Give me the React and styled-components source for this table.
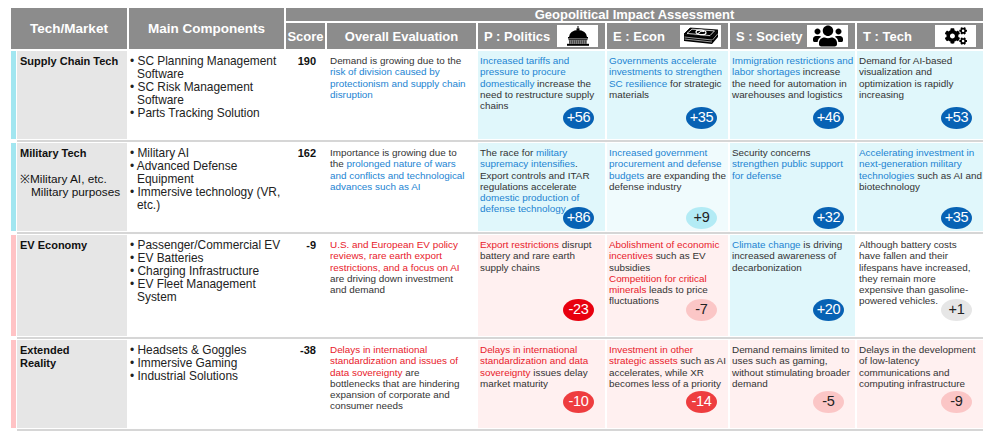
import React from "react";
import styled, { createGlobalStyle } from "styled-components";
import { FaUsers, FaCogs } from "react-icons/fa";

const GlobalStyle = createGlobalStyle`
  html, body { margin: 0; padding: 0; background: #fff; }
  body { font-family: "Liberation Sans", Arial, sans-serif; color: #333; }
  * { box-sizing: border-box; }
`;

const COLS = "116px 155px 39px 149px 127px 121px 125px 126px";

const Page = styled.div`
  width: 1000px;
  height: 437px;
  overflow: hidden;
  padding: 8px 0 0 11px;
`;

const Header = styled.div`
  display: grid;
  grid-template-columns: ${COLS};
  grid-template-rows: 13px 26px;
  gap: 2px;
  margin-bottom: 2px;
`;

const HeadCell = styled.div`
  grid-column: ${(p) => p.$col};
  grid-row: ${(p) => p.$row};
  background: #8c8c8c;
  color: #fff;
  font-weight: 700;
  font-size: ${(p) => p.$size || 13}px;
  line-height: 13px;
  display: flex;
  align-items: center;
  justify-content: ${(p) => (p.$left ? "space-between" : "center")};
  padding: ${(p) => (p.$left ? "0 7px 0 6px" : "0")};
  white-space: nowrap;
`;

const IconBox = styled.div`
  width: 41px;
  height: 22px;
  background: #fff;
  display: flex;
  align-items: center;
  justify-content: center;
  color: #000;
  flex: none;
`;

const Row = styled.div`
  display: grid;
  grid-template-columns: ${COLS};
  column-gap: 2px;
  height: ${(p) => p.$h}px;
`;

const Separator = styled.div`
  height: 2px;
  width: 966px;
  margin: 1px 0 1px 6px;
  background: #d6d6d6;
`;

const LabelCell = styled.div`
  display: flex;
`;

const Accent = styled.div`
  width: 5px;
  margin-right: 1px;
  background: ${(p) => (p.$tone === "neg" ? "#ffc3c5" : "#a2e6f0")};
`;

const LabelBody = styled.div`
  flex: 1;
  background: #e6e6e6;
  padding: 4px 0 0 3px;
  font-size: 11px;
  line-height: 13px;
  color: #111;
`;

const LabelTitle = styled.div`
  font-weight: 700;
`;

const LabelNote = styled.div`
  margin-top: 13px;
  font-size: 11.8px;
  white-space: nowrap;
`;

const NoteIndent = styled.span`
  display: inline-block;
  padding-left: 11px;
`;

const List = styled.ul`
  margin: 0;
  padding: 4px 0 0 1px;
  list-style: none;
  font-size: 11.9px;
  line-height: 13px;
  color: #222;
`;

const Item = styled.li`
  padding-left: 7px;
  text-indent: -7px;
`;

const ScoreCell = styled.div`
  text-align: right;
  padding: 4px 9px 0 0;
  font-weight: 700;
  font-size: 11px;
  line-height: 13px;
  color: #111;
`;

const TextCell = styled.div`
  position: relative;
  padding: 4px ${(p) => p.$pr || 0}px 0 ${(p) => p.$pl || 2}px;
  font-size: 9.9px;
  line-height: 11.3px;
  color: #333;
  background: ${(p) =>
    ({
      pos: "#e0f7fb",
      light: "#f0fbfd",
      neg: "#fff0f0",
      none: "#fff",
    }[p.$bg || "none"])};
`;

const Blue = styled.span`
  color: #1c84d2;
`;

const Red = styled.span`
  color: #e8202a;
`;

const BADGE = {
  blue: ["#0762b4", "#fff"],
  cyan: ["#b3ebf5", "#222"],
  red: ["#e8000f", "#fff"],
  red2: ["#ee3d3f", "#fff"],
  pink: ["#fbc6c6", "#222"],
  gray: ["#e6e6e6", "#222"],
};

const Badge = styled.div`
  position: absolute;
  right: 11px;
  bottom: ${(p) => p.$b}px;
  width: 31px;
  height: 22px;
  border-radius: 50%;
  background: ${(p) => BADGE[p.$v][0]};
  color: ${(p) => BADGE[p.$v][1]};
  display: flex;
  align-items: center;
  justify-content: center;
  font-size: 14.5px;
  letter-spacing: -0.3px;
`;

const CapitolIcon = () => (
  <svg width="26" height="20" viewBox="0 0 26 20">
    <rect x="12.5" y="0" width="1" height="2.5" fill="#000" />
    <rect x="11.5" y="2.3" width="3" height="2" fill="#000" />
    <path d="M4 11 A9 7 0 0 1 22 11 Z" fill="#000" />
    <rect x="3" y="11" width="20" height="1.6" fill="#000" />
    <rect x="3.5" y="13.2" width="19" height="1" fill="#000" />
    {[4.3, 6.3, 8.3, 10.3, 12.3, 14.3, 16.3, 18.3, 20.3].map((x) => (
      <rect key={x} x={x} y="14.2" width="1.2" height="3.6" fill="#000" />
    ))}
    <rect x="2" y="17.8" width="22" height="2" fill="#000" />
  </svg>
);

const MoneyIcon = () => (
  <svg width="36" height="18" viewBox="0 0 36 18">
    <polygon points="1,7 29,10 29,17 1,14" fill="#000" />
    <polygon points="29,10 35,3 35,10 29,17" fill="#000" />
    <line x1="1.5" y1="10" x2="29" y2="13" stroke="#fff" strokeWidth="0.6" />
    <line x1="1.5" y1="12" x2="29" y2="15" stroke="#fff" strokeWidth="0.6" />
    <line x1="29.5" y1="13" x2="35" y2="6.5" stroke="#fff" strokeWidth="0.6" />
    <polygon points="7,1 35,3 29,10 1,7" fill="#000" stroke="#000" strokeWidth="0.8" />
    <polygon points="9,2.2 31.5,3.9 27,8.6 4,6.4" fill="none" stroke="#fff" strokeWidth="0.8" />
    <ellipse cx="18" cy="5.4" rx="5" ry="2.2" fill="none" stroke="#fff" strokeWidth="1.2" transform="rotate(6 18 5.4)" />
    <path d="M15 6.5 Q18 3 21 4.5" fill="none" stroke="#fff" strokeWidth="1" />
  </svg>
);

const impactHeads = [
  { label: "P : Politics", icon: <CapitolIcon /> },
  { label: "E : Econ", icon: <MoneyIcon /> },
  { label: "S : Society", icon: <FaUsers size={30} /> },
  { label: "T : Tech", icon: <FaCogs size={22} /> },
];

const rows = [
  {
    h: 88,
    tone: "pos",
    badgeB: 10,
    label: <LabelTitle>Supply Chain Tech</LabelTitle>,
    items: ["SC Planning Management Software", "SC Risk Management Software", "Parts Tracking Solution"],
    score: "190",
    overall: (
      <>
        Demand is growing due to the <Blue>risk of division caused by protectionism and supply chain disruption</Blue>
      </>
    ),
    cells: [
      {
        bg: "pos",
        badge: ["+56", "blue"],
        text: (
          <>
            <Blue>Increased tariffs and pressure to procure domestically</Blue> increase the need to restructure supply
            chains
          </>
        ),
      },
      {
        bg: "pos",
        badge: ["+35", "blue"],
        text: (
          <>
            <Blue>Governments accelerate investments to strengthen SC resilience</Blue> for strategic materials
          </>
        ),
      },
      {
        bg: "pos",
        badge: ["+46", "blue"],
        text: (
          <>
            <Blue>Immigration restrictions and labor shortages</Blue> increase the need for automation in warehouses
            and logistics
          </>
        ),
      },
      {
        bg: "pos",
        badge: ["+53", "blue"],
        text: <>Demand for AI-based visualization and optimization is rapidly increasing</>,
      },
    ],
  },
  {
    h: 88,
    tone: "pos",
    badgeB: 2,
    label: (
      <>
        <LabelTitle>Military Tech</LabelTitle>
        <LabelNote>
          ※Military AI, etc.
          <br />
          <NoteIndent>Military purposes</NoteIndent>
        </LabelNote>
      </>
    ),
    items: ["Military AI", "Advanced Defense Equipment", "Immersive technology (VR, etc.)"],
    score: "162",
    overall: (
      <>
        Importance is growing due to the{" "}
        <Blue>prolonged nature of wars and conflicts and technological advances such as AI</Blue>
      </>
    ),
    cells: [
      {
        bg: "pos",
        badge: ["+86", "blue"],
        text: (
          <>
            The race for <Blue>military supremacy intensifies</Blue>. Export controls and ITAR regulations accelerate{" "}
            <Blue>domestic production of defense technology</Blue>
          </>
        ),
      },
      {
        bg: "light",
        badge: ["+9", "cyan"],
        text: (
          <>
            <Blue>Increased government procurement and defense budgets</Blue> are expanding the defense industry
          </>
        ),
      },
      {
        bg: "pos",
        badge: ["+32", "blue"],
        text: (
          <>
            Security concerns <Blue>strengthen public support for defense</Blue>
          </>
        ),
      },
      {
        bg: "pos",
        badge: ["+35", "blue"],
        text: (
          <>
            <Blue>Accelerating investment in next-generation military technologies</Blue> such as AI and biotechnology
          </>
        ),
      },
    ],
  },
  {
    h: 101,
    tone: "neg",
    badgeB: 15,
    label: <LabelTitle>EV Economy</LabelTitle>,
    items: ["Passenger/Commercial EV", "EV Batteries", "Charging Infrastructure", "EV Fleet Management System"],
    score: "-9",
    overall: (
      <>
        <Red>U.S. and European EV policy reviews, rare earth export restrictions, and a focus on AI</Red> are driving
        down investment and demand
      </>
    ),
    cells: [
      {
        bg: "neg",
        badge: ["-23", "red"],
        text: (
          <>
            <Red>Export restrictions</Red> disrupt battery and rare earth supply chains
          </>
        ),
      },
      {
        bg: "neg",
        badge: ["-7", "pink"],
        text: (
          <>
            <Red>Abolishment of economic incentives</Red> such as EV subsidies
            <br />
            <Red>Competition for critical minerals</Red> leads to price fluctuations
          </>
        ),
      },
      {
        bg: "pos",
        badge: ["+20", "blue"],
        text: (
          <>
            <Blue>Climate change</Blue> is driving increased awareness of decarbonization
          </>
        ),
      },
      {
        bg: "none",
        pr: 5,
        badge: ["+1", "gray"],
        text: (
          <>
            Although battery costs have fallen and their lifespans have increased, they remain more expensive than
            gasoline-powered vehicles.
          </>
        ),
      },
    ],
  },
  {
    h: 88,
    tone: "neg",
    badgeB: 15,
    label: (
      <LabelTitle>
        Extended
        <br />
        Reality
      </LabelTitle>
    ),
    items: ["Headsets & Goggles", "Immersive Gaming", "Industrial Solutions"],
    score: "-38",
    overall: (
      <>
        <Red>Delays in international standardization and issues of data sovereignty</Red> are bottlenecks that are
        hindering expansion of corporate and consumer needs
      </>
    ),
    cells: [
      {
        bg: "neg",
        badge: ["-10", "red2"],
        text: (
          <>
            <Red>Delays in international standardization and data sovereignty</Red> issues delay market maturity
          </>
        ),
      },
      {
        bg: "neg",
        badge: ["-14", "red2"],
        text: (
          <>
            <Red>Investment in other strategic assets</Red> such as AI accelerates, while XR becomes less of a priority
          </>
        ),
      },
      {
        bg: "neg",
        badge: ["-5", "pink"],
        text: <>Demand remains limited to uses such as gaming, without stimulating broader demand</>,
      },
      {
        bg: "neg",
        badge: ["-9", "pink"],
        text: <>Delays in the development of low-latency communications and computing infrastructure</>,
      },
    ],
  },
];

export default function App() {
  return (
    <Page>
      <GlobalStyle />
      <Header>
        <HeadCell $col="1" $row="1 / span 2" $size={13.5}>
          Tech/Market
        </HeadCell>
        <HeadCell $col="2" $row="1 / span 2" $size={13.5}>
          Main Components
        </HeadCell>
        <HeadCell $col="3 / span 6" $row="1">
          Geopolitical Impact Assessment
        </HeadCell>
        <HeadCell $col="3" $row="2">
          Score
        </HeadCell>
        <HeadCell $col="4" $row="2">
          Overall Evaluation
        </HeadCell>
        {impactHeads.map((h, i) => (
          <HeadCell key={h.label} $col={`${5 + i}`} $row="2" $left>
            <span>{h.label}</span>
            <IconBox>{h.icon}</IconBox>
          </HeadCell>
        ))}
      </Header>
      {rows.map((r, ri) => (
        <React.Fragment key={ri}>
          <Row $h={r.h}>
            <LabelCell>
              <Accent $tone={r.tone} />
              <LabelBody>{r.label}</LabelBody>
            </LabelCell>
            <List>
              {r.items.map((it) => (
                <Item key={it}>• {it}</Item>
              ))}
            </List>
            <ScoreCell>{r.score}</ScoreCell>
            <TextCell $pl={3} $pr={7}>
              {r.overall}
            </TextCell>
            {r.cells.map((c, ci) => (
              <TextCell key={ci} $bg={c.bg} $pr={c.pr}>
                {c.text}
                <Badge $v={c.badge[1]} $b={r.badgeB}>
                  {c.badge[0]}
                </Badge>
              </TextCell>
            ))}
          </Row>
          <Separator />
        </React.Fragment>
      ))}
    </Page>
  );
}
